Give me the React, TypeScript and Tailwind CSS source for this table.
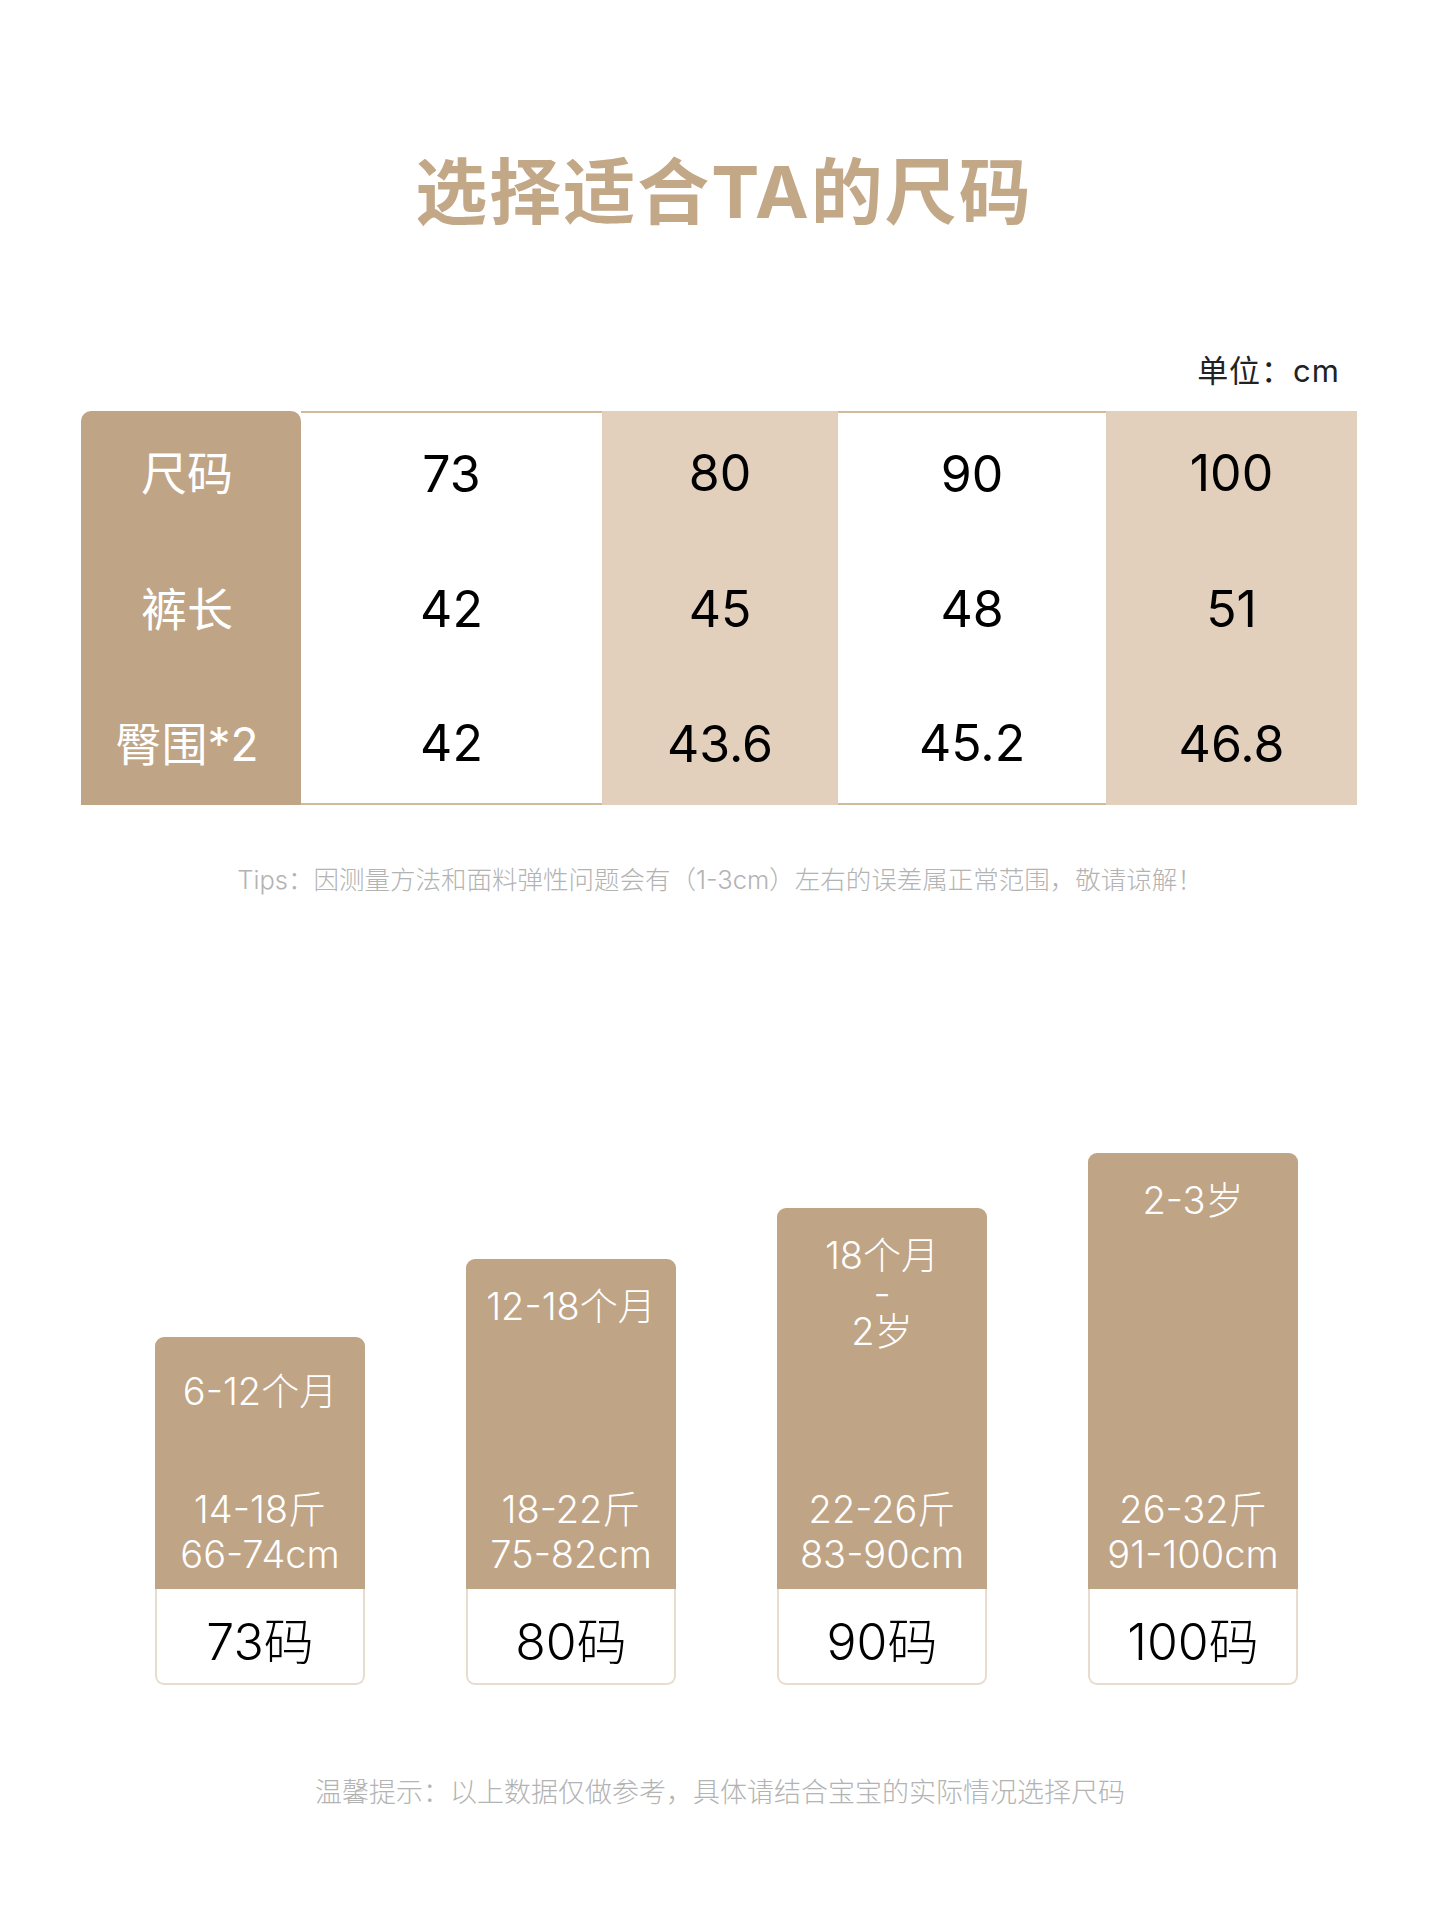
const font = "font-['Inter','Noto_Sans_CJK_SC',sans-serif]";

type Column = { size: string; length: string; hip: string; tinted: boolean; width: string };

const columns: Column[] = [
  { size: "73", length: "42", hip: "42", tinted: false, width: "w-[301px]" },
  { size: "80", length: "45", hip: "43.6", tinted: true, width: "w-[236px]" },
  { size: "90", length: "48", hip: "45.2", tinted: false, width: "w-[268px]" },
  { size: "100", length: "51", hip: "46.8", tinted: true, width: "w-[251px]" },
];

const rowHeights = ["h-[124px]", "h-[148px]", "h-[122px]"];

type Bar = { top: string[]; weight: string; height: string; code: string; height2: string; pad: string };

const bars: Bar[] = [
  { top: ["6-12个月"], weight: "14-18斤", height2: "66-74cm", height: "h-[252px]", code: "73码", pad: "pt-[35px]" },
  { top: ["12-18个月"], weight: "18-22斤", height2: "75-82cm", height: "h-[330px]", code: "80码", pad: "pt-[28px]" },
  { top: ["18个月", "-", "2岁"], weight: "22-26斤", height2: "83-90cm", height: "h-[381px]", code: "90码", pad: "pt-[28px]" },
  { top: ["2-3岁"], weight: "26-32斤", height2: "91-100cm", height: "h-[436px]", code: "100码", pad: "pt-[28px]" },
];

function SizeTable() {
  const labels = ["尺码", "裤长", "臀围*2"];
  return (
    <div className="flex">
      <div className="w-[220px] h-[394px] bg-[#bfa486] rounded-t-[10px] flex flex-col">
        {labels.map((label, i) => (
          <div key={label} className={`${rowHeights[i]} flex items-center justify-center pr-[8px] text-white text-[46px] leading-none`}>
            {label}
          </div>
        ))}
      </div>
      {columns.map((col) => (
        <div
          key={col.size}
          className={`${col.width} h-[394px] flex flex-col ${
            col.tinted ? "bg-[#e3d0bc]" : "bg-white border-y-2 border-[#d2b999]"
          }`}
        >
          {[col.size, col.length, col.hip].map((value, i) => (
            <div
              key={i}
              className={`${rowHeights[i]} flex items-center justify-center text-black text-[50px] leading-none`}
            >
              {value}
            </div>
          ))}
        </div>
      ))}
    </div>
  );
}

function AgeBar({ bar }: { bar: Bar }) {
  return (
    <div className="w-[210px] flex flex-col">
      <div
        className={`${bar.height} ${bar.pad} bg-[#bfa486] rounded-t-[9px] flex flex-col justify-between items-center pb-[12px] text-white font-light text-[38px]`}
      >
        <div className="flex flex-col items-center leading-[38px]">
          {bar.top.map((line, i) => (
            <span key={i}>{line}</span>
          ))}
        </div>
        <div className="flex flex-col items-center leading-[45px]">
          <span>{bar.weight}</span>
          <span>{bar.height2}</span>
        </div>
      </div>
      <div className="h-[96px] bg-white border-2 border-t-0 border-[#e8dccf] rounded-b-[9px] flex items-center justify-center pt-[12px] text-black font-light text-[50px] leading-none">
        {bar.code}
      </div>
    </div>
  );
}

export default function App() {
  return (
    <div className={`w-[1440px] h-[1920px] bg-white ${font} flex flex-col`}>
      <h1 className="pt-[156px] text-center text-[72px] leading-none font-bold text-[#c3a888] tracking-[2px] pl-[8px]">
        选择适合TA的尺码
      </h1>

      <div className="mt-[127px] pl-[81px] w-[1357px]">
        <div className="flex justify-end pr-[17px] text-[31px] leading-none text-[#222] tracking-[1px]">单位：cm</div>
        <div className="mt-[25px]">
          <SizeTable />
        </div>
      </div>

      <p className="mt-[62px] text-center text-[25.5px] leading-none text-[#b3b3b3] font-light">
        Tips：因测量方法和面料弹性问题会有（1-3cm）左右的误差属正常范围，敬请谅解！
      </p>

      <div className="mt-[260px] pl-[155px] flex items-end gap-[101px]">
        {bars.map((bar) => (
          <AgeBar key={bar.code} bar={bar} />
        ))}
      </div>

      <p className="mt-[94px] text-center text-[27px] leading-none text-[#b3b3b3] font-light">
        温馨提示：以上数据仅做参考，具体请结合宝宝的实际情况选择尺码
      </p>
    </div>
  );
}
